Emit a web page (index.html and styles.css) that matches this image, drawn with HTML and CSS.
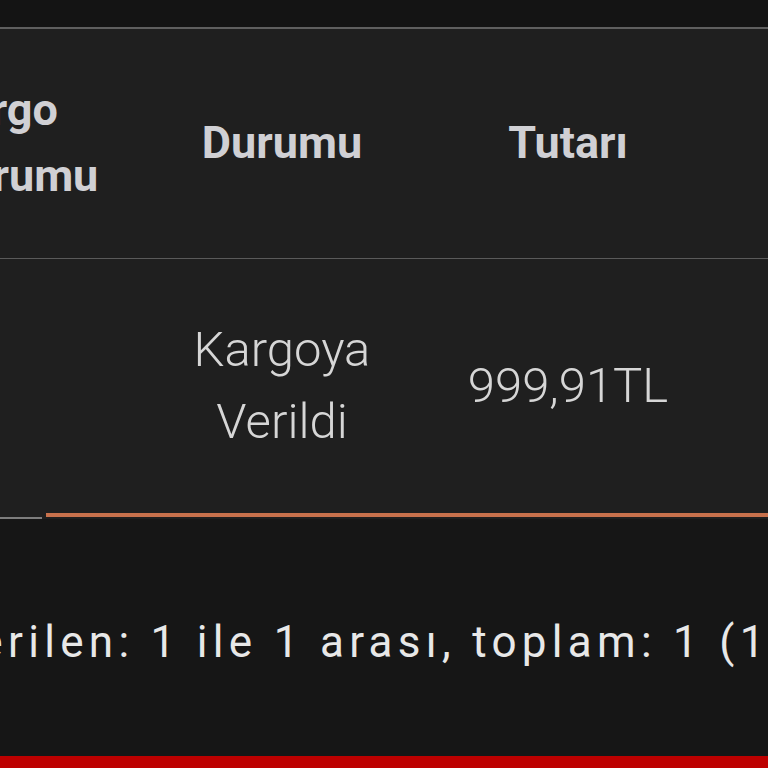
FILE: index.html
```html
<!DOCTYPE html>
<html lang="tr">
<head>
<meta charset="utf-8">
<title>Siparişler</title>
<link rel="stylesheet" href="styles.css">
</head>
<body>
<div class="page">
  <div class="top-band"></div>
  <div class="table-wrap">
    <table class="orders">
      <thead>
        <tr>
          <th class="c-cargo">Kargo<br>Durumu</th>
          <th class="c-status">Durumu</th>
          <th class="c-amount">Tutarı</th>
          <th class="c-more"></th>
        </tr>
      </thead>
      <tbody>
        <tr>
          <td class="c-cargo"></td>
          <td class="c-status">Kargoya<br>Verildi</td>
          <td class="c-amount">999,91TL</td>
          <td class="c-more"></td>
        </tr>
      </tbody>
    </table>
  </div>
  <div class="table-end">
    <span class="end-gray"></span>
    <span class="end-orange"></span>
  </div>
  <div class="footer">
    <p class="info">Gösterilen: 1 ile 1 arası, toplam: 1 (1 sayfa)</p>
  </div>
  <div class="red-bar"></div>
</div>
</body>
</html>
```

FILE: styles.css
```css
html, body {
  margin: 0;
  padding: 0;
  background: #151515;
  overflow: hidden;
}

.page {
  width: 768px;
  height: 768px;
  display: flex;
  flex-direction: column;
  overflow: hidden;
  font-family: Roboto, "Liberation Sans", sans-serif;
}

.top-band {
  height: 27px;
  flex: none;
  background: #141414;
}

.table-wrap {
  flex: none;
  border-top: 2px solid #5f5f5f;
  background: #1f1f1f;
  margin-left: -150px;
  width: 1100px;
}

.orders {
  border-collapse: collapse;
  table-layout: fixed;
  width: 1100px;
}

.orders th,
.orders td {
  box-sizing: border-box;
  padding: 0;
  text-align: center;
  vertical-align: middle;
}

.orders th {
  height: 229px;
  border-bottom: 1px solid #5a5a5a;
  font-weight: 700;
  font-size: 45px;
  line-height: 66px;
  color: #d0d0d4;
}

.orders th.c-cargo {
  text-align: left;
  padding-left: 88px;
}

.orders td {
  height: 255px;
  font-weight: 300;
  font-size: 49px;
  line-height: 72px;
  color: #d6d6d6;
}

.c-cargo { width: 300px; }
.c-status { width: 264px; }
.c-amount { width: 308px; }
.c-more { width: 228px; }

.table-end {
  flex: none;
  height: 6px;
  display: flex;
  align-items: flex-start;
  background: #1f1f1f;
}

.end-gray {
  width: 42px;
  height: 2px;
  margin-top: 4px;
  background: #7d7d7d;
}

.end-orange {
  flex: 1;
  height: 4px;
  margin-left: 4px;
  background: #c8714c;
}

.footer {
  flex: 1;
  background: #161616;
  display: flex;
  align-items: flex-start;
}

.info {
  margin: 97px 0 0 -134px;
  white-space: nowrap;
  font-size: 44px;
  letter-spacing: 5.3px;
  color: #e8e8e8;
  line-height: 52px;
}

.red-bar {
  flex: none;
  height: 12px;
  background: #bd0000;
}
```
